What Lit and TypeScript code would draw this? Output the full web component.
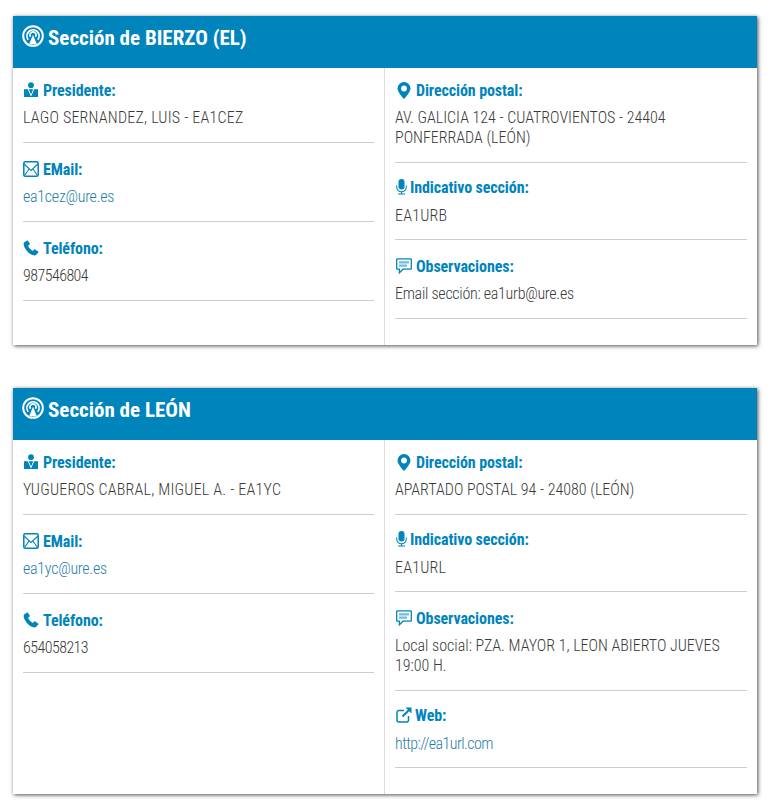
import { LitElement, html, css, svg } from "lit";
import { customElement } from "lit/decorators.js";

const icons: Record<string, any> = {
  radio: svg`<svg class="ic-head" viewBox="0 0 24 24" fill="none" stroke="#fff"><circle cx="12" cy="12" r="10.7" stroke-width="2.200"/><path d="M6.800 16a6.600 6.600 0 1 1 10.400 0" stroke-width="1.900"/><path d="M9.300 12.800a3.300 3.300 0 1 1 5.400 0" stroke-width="1.700"/><path d="M12 10.500l4.200 10.500H7.800z" fill="#fff" stroke="none"/></svg>`,
  user: svg`<svg class="ic user" width="14" height="16" viewBox="0 0 14 16"><circle cx="7" cy="3.200" r="2.900" fill="#0084bc"/><path d="M0 7.200h14V15H0z" fill="#0084bc"/><path d="M4.200 7l2.800 6.600L9.800 7" fill="none" stroke="#fff" stroke-width="1"/><path d="M7 7.400l1 1-1 3-1-3z" fill="#0084bc"/></svg>`,
  mail: svg`<svg class="ic" width="16" height="16" viewBox="0 0 16 16" fill="none" stroke="#0084bc" stroke-width="1.500"><rect x=".8" y=".8" width="14.400" height="14.400" rx="1.500"/><path d="M1 3l7 6.400L15 3M1.500 14.500l4.700-6.700M14.500 14.500L9.800 7.800" stroke-width="1.100"/></svg>`,
  phone: svg`<svg class="ic" width="16" height="16" viewBox="0 0 16 16"><path d="M3.800.8L1.300 2.300C.5 3 .5 4.500 1 6c1.300 3.800 5 7.800 8.600 9.100 1.500.5 2.900.4 3.700-.4l2-2.300c.3-.4.200-.8-.1-1l-3-1.900c-.4-.3-.8-.2-1.100.1l-1.200 1.300c-2-.8-4-3-4.800-5.200l1.500-1.200c.3-.3.400-.7.200-1L5 1C4.700.5 4.200.5 3.800.8z" fill="#0084bc"/></svg>`,
  pin: svg`<svg class="ic pin" width="14" height="17" viewBox="0 0 14 17"><path fill-rule="evenodd" d="M7 0a6.500 6.500 0 0 1 6.500 6.500C13.500 10.500 7 17 7 17S.5 10.500.5 6.500A6.500 6.500 0 0 1 7 0zm0 3.600a2.900 2.900 0 1 0 0 5.800 2.900 2.900 0 0 0 0-5.800z" fill="#0084bc"/></svg>`,
  mic: svg`<svg class="ic mic" width="11" height="16" viewBox="0 0 11 16"><rect x="2.500" y="0" width="6" height="10.500" rx="3" fill="#0084bc"/><path d="M.7 6.500V8a4.800 4.800 0 0 0 9.600 0V6.500M5.500 12.800v1.700M2 15h7" fill="none" stroke="#0084bc" stroke-width="1.100"/></svg>`,
  chat: svg`<svg class="ic chat" width="16" height="16" viewBox="0 0 16 16"><path d="M1.400.8h13.200c.4 0 .7.300.7.700v9c0 .4-.3.700-.7.700H7l-3.600 3.600v-3.600H1.400c-.4 0-.7-.3-.7-.7v-9c0-.4.300-.7.700-.7z" fill="none" stroke="#0084bc" stroke-width="1.300"/><path d="M3 3.200h10v2.300H3zM3 6.500h8v2.200H3z" fill="#0084bc" opacity=".55"/></svg>`,
  link: svg`<svg class="ic ext" width="16" height="16" viewBox="0 0 16 16" fill="none" stroke="#0084bc"><path d="M12.500 9v4a2 2 0 0 1-2 2H3a2 2 0 0 1-2-2V5.500a2 2 0 0 1 2-2h5" stroke-width="1.500"/><path d="M6.500 9.500L14 2" stroke-width="2"/><path d="M9.500 .5h6v6z" fill="#0084bc" stroke="none"/></svg>`,
};

type Row = { icon: string; label: string; value: string; link?: boolean; short?: boolean; track?: string };
type Card = { title: string; left: Row[]; right: Row[] };

const cards: Card[] = [
  {
    title: "Sección de BIERZO (EL)",
    left: [
      { icon: "user", label: "Presidente:", value: "LAGO SERNANDEZ, LUIS - EA1CEZ", track: "wide" },
      { icon: "mail", label: "EMail:", value: "ea1cez@ure.es", link: true, track: "tight" },
      { icon: "phone", label: "Teléfono:", value: "987546804", track: "tighter" },
    ],
    right: [
      { icon: "pin", label: "Dirección postal:", value: "AV. GALICIA 124 - CUATROVIENTOS - 24404 PONFERRADA (LEÓN)" },
      { icon: "mic", label: "Indicativo sección:", value: "EA1URB", short: true, track: "wide" },
      { icon: "chat", label: "Observaciones:", value: "Email sección: ea1urb@ure.es", track: "tight" },
    ],
  },
  {
    title: "Sección de LEÓN",
    left: [
      { icon: "user", label: "Presidente:", value: "YUGUEROS CABRAL, MIGUEL A. - EA1YC", track: "wide" },
      { icon: "mail", label: "EMail:", value: "ea1yc@ure.es", link: true, track: "tight" },
      { icon: "phone", label: "Teléfono:", value: "654058213", track: "tighter" },
    ],
    right: [
      { icon: "pin", label: "Dirección postal:", value: "APARTADO POSTAL 94 - 24080 (LEÓN)" },
      { icon: "mic", label: "Indicativo sección:", value: "EA1URL", short: true, track: "wide" },
      { icon: "chat", label: "Observaciones:", value: "Local social: PZA. MAYOR 1, LEON ABIERTO JUEVES 19:00 H." },
      { icon: "link", label: "Web:", value: "http://ea1url.com", link: true, short: true, track: "tighter" },
    ],
  },
];

@customElement("app-root")
export class AppRoot extends LitElement {
  static styles = css`
    :host {
      display: block;
      font-family: Roboto, "Liberation Sans", sans-serif;
      font-stretch: 75%;
      font-size: 16px;
      font-weight: 320;
      color: #3a3a3a;
    }
    .page {
      display: flex;
      flex-direction: column;
      gap: 43px;
      padding: 16px 20px 11px 13px;
      box-sizing: border-box;
    }
    .card {
      background: #fff;
      box-shadow: 1px 1px 4px rgba(0, 0, 0, 0.7);
    }
    .head {
      height: 52px;
      box-sizing: border-box;
      background: #0084bc;
      color: #fff;
      display: flex;
      align-items: flex-start;
      gap: 4px;
      padding: 8px 9px;
      font-size: 21px;
      font-weight: 700;
      line-height: 28px;
    }
    .ic-head { width: 22px; height: 22px; margin-top: 1px; }
    .cols { display: grid; grid-template-columns: 371px 1fr; }
    .col { padding: 11px 10px 26px; }
    .col + .col { border-left: 1px solid #ddd; }
    .row { padding-bottom: 14px; margin-bottom: 15px; border-bottom: 1px solid #ccc; }
    .row:last-child { margin-bottom: 0; }
    .label {
      display: flex;
      align-items: center;
      gap: 4px;
      height: 22px;
      color: #0084bc;
      font-weight: 700;
      letter-spacing: -0.1px;
    }
    .short { padding-bottom: 13px; }
    .short .label { height: 18px; }
    .value { margin-top: 7px; line-height: 20px; }
    .short .value { margin-top: 10px; }
    .value.link { color: #1f7ea8; }
    .value.wide { letter-spacing: 0.22px; }
    .value.tight { letter-spacing: -0.27px; }
    .value.tighter { letter-spacing: -0.55px; }
    .ic { flex: none; }
    .ic.user { margin: 0 1px; }
    .ic.pin { margin: 0 1px 0 2px; }
    .ic.chat, .ic.ext { margin-left: 1px; }
    .ic.mic { margin: 0 -1px 0 1px; }
    .ic.ext { margin-right: -1px; }
  `;

  private renderRow(r: Row) {
    return html`<div class="row ${r.short ? "short" : ""}">
      <div class="label">${icons[r.icon]}<span>${r.label}</span></div>
      <div class="value ${r.link ? "link" : ""} ${r.track ?? ""}">${r.value}</div>
    </div>`;
  }

  render() {
    return html`<div class="page">
      ${cards.map(
        (c) => html`<section class="card">
          <div class="head">${icons.radio}<span>${c.title}</span></div>
          <div class="cols">
            <div class="col">${c.left.map((r) => this.renderRow(r))}</div>
            <div class="col">${c.right.map((r) => this.renderRow(r))}</div>
          </div>
        </section>`
      )}
    </div>`;
  }
}
